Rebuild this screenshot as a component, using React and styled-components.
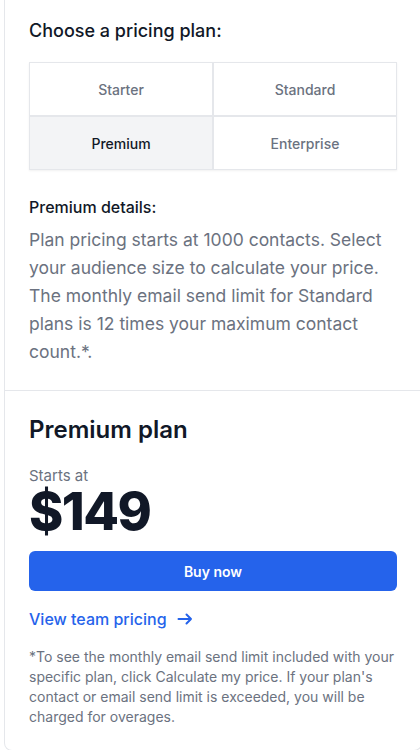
import React from "react";
import styled, { createGlobalStyle } from "styled-components";

const Global = createGlobalStyle`
  html, body { margin: 0; padding: 0; background: #ffffff; overflow: hidden; }
  body { font-family: Inter, "Noto Sans", sans-serif; -webkit-font-smoothing: antialiased; }
  * { box-sizing: border-box; }
`;

const Card = styled.div`
  margin-left: 4px;
  width: 418px;
  background: #fff;
  border: 1px solid #e5e7eb;
  border-top: none;
  border-radius: 0 0 8px 8px;
`;

const Section = styled.section`
  padding: ${(p) => p.$pad};
  border-top: ${(p) => (p.$divided ? "1px solid #e5e7eb" : "none")};
`;

const Heading = styled.h2`
  margin: 0;
  font-size: 18px;
  line-height: 24px;
  font-weight: 500;
  color: #111827;
`;

const TabGrid = styled.div`
  margin-top: 19px;
  display: grid;
  grid-template-columns: 1fr 1fr;
  box-shadow: 0 1px 2px rgba(0, 0, 0, 0.06);
`;

const Tab = styled.button`
  height: 54px;
  border: 1px solid #e5e7eb;
  background: ${(p) => (p.$active ? "#f3f4f6" : "#ffffff")};
  color: ${(p) => (p.$active ? "#111827" : "#6b7280")};
  font-family: inherit;
  font-size: 14px;
  font-weight: 500;
  padding: 0;
  cursor: pointer;
`;

const SubHeading = styled.h3`
  margin: 25px 0 0;
  font-size: 16px;
  line-height: 24px;
  font-weight: 500;
  color: #111827;
`;

const Body = styled.p`
  margin: 7px 0 0;
  font-size: 17.5px;
  line-height: 28px;
  color: #6b7280;
`;

const PlanTitle = styled.h2`
  margin: 0;
  font-size: 24px;
  line-height: 32px;
  font-weight: 600;
  color: #111827;
`;

const StartsAt = styled.div`
  margin-top: 20px;
  font-size: 15px;
  line-height: 20px;
  color: #6b7280;
`;

const Price = styled.div`
  font-size: 52px;
  line-height: 52px;
  font-weight: 800;
  color: #111827;
  letter-spacing: -1.5px;
`;

const BuyButton = styled.button`
  margin-top: 13px;
  width: 100%;
  height: 40px;
  border: none;
  border-radius: 6px;
  background: #2563eb;
  color: #fff;
  font-family: inherit;
  font-size: 14px;
  font-weight: 600;
  cursor: pointer;
`;

const TeamLink = styled.a`
  margin-top: 16px;
  display: inline-flex;
  align-items: center;
  gap: 10px;
  font-size: 16px;
  line-height: 24px;
  font-weight: 500;
  color: #2563eb;
  text-decoration: none;
`;

const Footnote = styled.p`
  margin: 16px 0 0;
  font-size: 14px;
  line-height: 20px;
  color: #6b7280;
`;

const Arrow = () => (
  <svg width="16" height="16" viewBox="0 0 16 16" fill="none" stroke="currentColor" strokeWidth="2" strokeLinecap="round" strokeLinejoin="round">
    <path d="M1.5 8h12.5M9.5 3.5 14 8l-4.5 4.5" />
  </svg>
);

export default function App() {
  const tabs = ["Starter", "Standard", "Premium", "Enterprise"];
  return (
    <>
      <Global />
      <Card>
        <Section $pad="19px 24px 24px 24px">
          <Heading>Choose a pricing plan:</Heading>
          <TabGrid>
            {tabs.map((t) => (
              <Tab key={t} $active={t === "Premium"}>{t}</Tab>
            ))}
          </TabGrid>
          <SubHeading>Premium details:</SubHeading>
          <Body>
            Plan pricing starts at 1000 contacts. Select your audience size to calculate your price. The monthly email send limit for Standard plans is 12 times your maximum contact count.*.
          </Body>
        </Section>
        <Section $divided $pad="23px 24px 23px 24px">
          <PlanTitle>Premium plan</PlanTitle>
          <StartsAt>Starts at</StartsAt>
          <Price>$149</Price>
          <BuyButton>Buy now</BuyButton>
          <div>
            <TeamLink href="#">View team pricing <Arrow /></TeamLink>
          </div>
          <Footnote>
            *To see the monthly email send limit included with your specific plan, click Calculate my price. If your plan's contact or email send limit is exceeded, you will be charged for overages.
          </Footnote>
        </Section>
      </Card>
    </>
  );
}
